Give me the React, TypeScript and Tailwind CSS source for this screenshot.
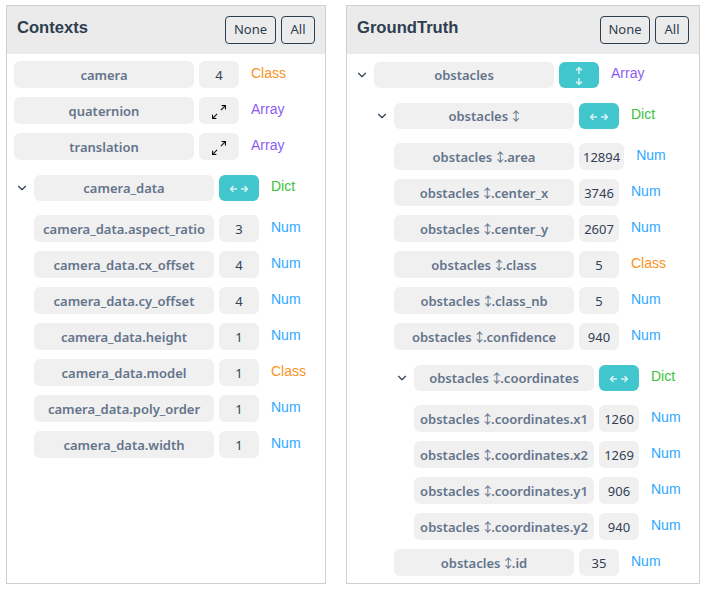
import { BsArrowsAngleExpand } from "react-icons/bs";
import { ChevronDown } from "lucide-react";

type Kind = "Class" | "Array" | "Dict" | "Num";

type Item = {
  label: string;
  kind: Kind;
  value?: string;
  children?: Item[];
  vertical?: boolean;
};

const kindColor: Record<Kind, string> = {
  Class: "text-[#f7931e]",
  Array: "text-[#8b5cf6]",
  Dict: "text-[#3cc13b]",
  Num: "text-[#2ea8ff]",
};

const ob = "obstacles ↕";

const contexts: Item[] = [
  { label: "camera", kind: "Class", value: "4" },
  { label: "quaternion", kind: "Array" },
  { label: "translation", kind: "Array" },
  {
    label: "camera_data",
    kind: "Dict",
    children: [
      { label: "camera_data.aspect_ratio", kind: "Num", value: "3" },
      { label: "camera_data.cx_offset", kind: "Num", value: "4" },
      { label: "camera_data.cy_offset", kind: "Num", value: "4" },
      { label: "camera_data.height", kind: "Num", value: "1" },
      { label: "camera_data.model", kind: "Class", value: "1" },
      { label: "camera_data.poly_order", kind: "Num", value: "1" },
      { label: "camera_data.width", kind: "Num", value: "1" },
    ],
  },
];

const groundTruth: Item[] = [
  {
    label: "obstacles",
    kind: "Array",
    vertical: true,
    children: [
      {
        label: ob,
        kind: "Dict",
        children: [
          { label: `${ob}.area`, kind: "Num", value: "12894" },
          { label: `${ob}.center_x`, kind: "Num", value: "3746" },
          { label: `${ob}.center_y`, kind: "Num", value: "2607" },
          { label: `${ob}.class`, kind: "Class", value: "5" },
          { label: `${ob}.class_nb`, kind: "Num", value: "5" },
          { label: `${ob}.confidence`, kind: "Num", value: "940" },
          {
            label: `${ob}.coordinates`,
            kind: "Dict",
            children: [
              { label: `${ob}.coordinates.x1`, kind: "Num", value: "1260" },
              { label: `${ob}.coordinates.x2`, kind: "Num", value: "1269" },
              { label: `${ob}.coordinates.y1`, kind: "Num", value: "906" },
              { label: `${ob}.coordinates.y2`, kind: "Num", value: "940" },
            ],
          },
          { label: `${ob}.id`, kind: "Num", value: "35" },
        ],
      },
    ],
  },
];

function ArrowPair({ vertical }: { vertical?: boolean }) {
  return (
    <svg
      width="18"
      height="18"
      viewBox="0 0 18 18"
      fill="none"
      stroke="#d5f3f4"
      strokeWidth="1.5"
      className={vertical ? "rotate-90" : ""}
    >
      <path d="M0.5 9h6.5M3.5 6 0.5 9l3 3M11 9h6.5M14.5 6l3 3-3 3" />
    </svg>
  );
}

function LabelText({ label }: { label: string }) {
  const [head, tail] = label.split("↕");
  if (tail === undefined) return <>{label}</>;
  return (
    <>
      {head}
      <span className="font-normal leading-[0] tracking-[-3px] [font-family:'Noto_Sans_CJK_JP',sans-serif]">↕</span>
      {tail}
    </>
  );
}

function Row({ item }: { item: Item }) {
  const open = !!item.children;
  return (
    <div className="relative mb-[9px] flex items-start">
      {open && (
        <ChevronDown
          size={14}
          strokeWidth={2}
          className="absolute top-[6px] left-[-19px] text-[#334155]"
        />
      )}
      <div
        className={`flex w-[180px] shrink-0 items-center justify-center whitespace-nowrap rounded-md bg-[#f0f0f0] text-[13px] font-semibold text-[#64748b] ${open ? "h-[26px] pt-px" : "h-[27px] pt-[2px]"}`}
      >
        <span className="leading-none [word-spacing:-2px]">
          <LabelText label={item.label} />
        </span>
      </div>
      <div
        className={`ml-[5px] flex min-w-[40px] shrink-0 items-center justify-center rounded-md px-[4px] text-[13px] text-[#334155] ${open ? "h-[26px] bg-[#40c6cc] pt-px" : "h-[27px] bg-[#f0f0f0] pt-[2px]"}`}
      >
        {open ? (
          <ArrowPair vertical={item.vertical} />
        ) : item.value ? (
          item.value
        ) : (
          <BsArrowsAngleExpand stroke="currentColor" strokeWidth={0.3} className="text-[14px] text-black" />
        )}
      </div>
      <span
        className={`ml-3 text-sm [font-family:'Liberation_Sans',sans-serif] ${open ? "leading-[22px]" : "leading-[24px]"} ${kindColor[item.kind]}`}
      >
        {item.kind}
      </span>
    </div>
  );
}

function Tree({ items }: { items: Item[] }) {
  return (
    <>
      {items.map((item) =>
        item.children ? (
          <div key={item.label} className="pt-[6px] pl-5">
            <Row item={item} />
            <div className={item.children[0].children ? "" : "pt-[5px]"}>
              <Tree items={item.children} />
            </div>
          </div>
        ) : (
          <Row key={item.label} item={item} />
        ),
      )}
    </>
  );
}

function Panel({
  title,
  items,
  width,
  noneWidth,
  bodyClass,
}: {
  title: string;
  items: Item[];
  width: string;
  noneWidth: string;
  bodyClass: string;
}) {
  return (
    <section className={`flex h-[579px] shrink-0 flex-col overflow-hidden border border-[#d0d0d0] ${width}`}>
      <header className="flex h-[48px] shrink-0 items-center justify-between bg-[#ebebeb] pr-[10px] pl-[10px]">
        <h2 className="-mt-[3px] text-[16.6px] font-bold text-[#2d3e50] [font-family:'Liberation_Sans',sans-serif]">
          {title}
        </h2>
        <div className="flex gap-[5px]">
          <button className={`h-[28px] rounded-[4px] border border-[#2d3e50] text-[13px] text-[#2d3e50] ${noneWidth}`}>
            None
          </button>
          <button className="h-[28px] w-[34px] rounded-[4px] border border-[#2d3e50] text-[13px] text-[#2d3e50]">
            All
          </button>
        </div>
      </header>
      <div className={`pl-[7px] ${bodyClass}`}>
        <Tree items={items} />
      </div>
    </section>
  );
}

export default function App() {
  return (
    <div className="flex h-[591px] w-[713px] gap-5 overflow-hidden bg-white pt-[5px] pl-[6px] [font-family:'Noto_Sans',sans-serif]">
      <Panel title="Contexts" items={contexts} width="w-[320px]" noneWidth="w-[51px]" bodyClass="pt-[7px]" />
      <Panel
        title="GroundTruth"
        items={groundTruth}
        width="w-[354px]"
        noneWidth="w-[50px]"
        bodyClass="pt-[8px] [&>div:first-child]:pt-0"
      />
    </div>
  );
}
